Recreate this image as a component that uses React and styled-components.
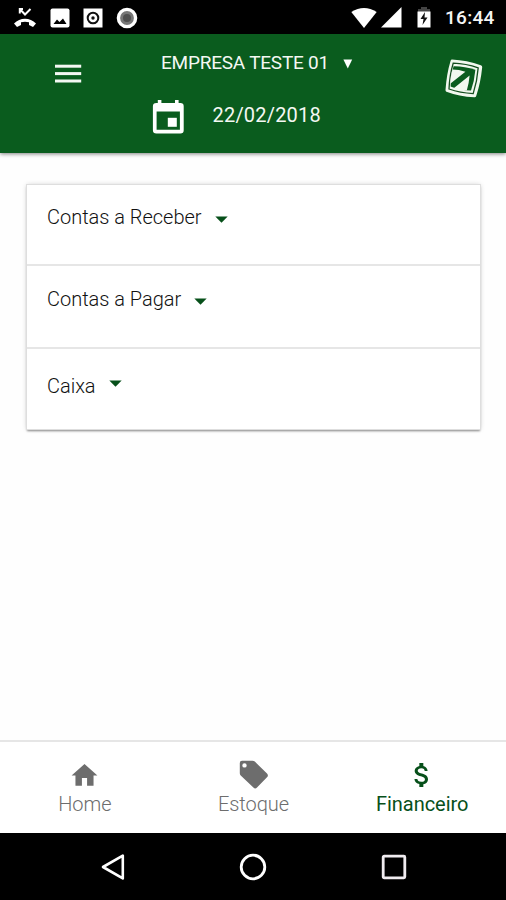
import React, { useState } from 'react'
import styled, { createGlobalStyle } from 'styled-components';
import { MdHome, MdAttachMoney } from 'react-icons/md';

const accounts = [
  { title: 'Contas a Receber', height: 79, top: 19, arrow: 3 },
  { title: 'Contas a Pagar', height: 83, top: 20, arrow: 3 },
  { title: 'Caixa', height: 82, top: 24, arrow: -2 },
];

const StatusBar = () => (
  <Status>
    <StatusGroup>
      <svg width="24" height="21" viewBox="0 0 24 21" fill="#fff">
        <path d="M1 16.5 C7 10 17 10 23 16.5 L20 20 L16 18 V15.3 Q12 14 8 15.3 V18 L4 20 Z" />
        <path d="M6.8 6.5 V2 H10 M7 2.3 L12 7.5 L17.5 2" fill="none" stroke="#fff" strokeWidth="2" />
      </svg>
      <svg width="20" height="20" viewBox="0 0 20 20">
        <rect x="0.5" y="0.5" width="19" height="19" rx="2" fill="#fff" />
        <path d="M3.5 16 L7 11.5 L9.5 14 L13 10.5 L16.5 16 Z" fill="#000" />
      </svg>
      <svg width="20" height="20" viewBox="0 0 20 20">
        <rect x="0.5" y="0.5" width="19" height="19" fill="#fff" />
        <circle cx="10" cy="10" r="5.3" fill="none" stroke="#111" strokeWidth="2" />
        <circle cx="10" cy="10" r="1.7" fill="#111" />
      </svg>
      <svg width="22" height="22" viewBox="0 0 22 22">
        <circle cx="11" cy="11" r="8.6" fill="#777" stroke="#fff" strokeWidth="3.4" />
        <circle cx="11" cy="11" r="4" fill="#4f4f4f" />
      </svg>
    </StatusGroup>
    <StatusRight>
      <svg width="26" height="20" viewBox="0 0 26 20">
        <path d="M0.3 4 Q13 -4 25.7 4 L13 20 Z" fill="#fff" />
      </svg>
      <svg width="21" height="21" viewBox="0 0 21 21">
        <path d="M0 20.5 L20.5 0 V20.5 Z" fill="#fff" />
      </svg>
      <svg width="14" height="21" viewBox="0 0 14 21">
        <path d="M4 0 H10 V2 H13 V6 H1 V2 H4 Z" fill="#444" />
        <rect x="0.5" y="4.5" width="13" height="16" fill="#fff" />
        <path d="M8 5 L3.5 12 H6.5 L5.5 18 L10.5 10.5 H7.5 Z" fill="#111" />
      </svg>
      <Clock>16:44</Clock>
    </StatusRight>
  </Status>
)

const Logo = () => (
  <svg width="38" height="39" viewBox="0 0 38 39">
    <path d="M7 0.6 Q22 1.4 35.8 6.2 Q37.4 6.8 37.2 8.2 Q35.6 24 31.2 37 Q30.8 38.4 29.4 38.3 Q14 37.6 1.4 32.8 Q0.4 32.2 0.5 31 Q1.6 15 5.6 1.8 Q6 0.6 7 0.6 Z" fill="#f2f8ef" />
    <path d="M8.2 4.2 Q21 4.6 33.2 8.9 Q32.2 22 28.2 34.6 Q15 34 4 30 Q4.6 16 8.2 4.2 Z" fill="none" stroke="#164f20" strokeWidth="1.3" />
    <path d="M8.6 7.2 Q19 7 30.4 10.8 Q29.4 22 26 31.6 Q15 31.6 5.6 27.6 Q5.8 16 8.6 7.2 Z" fill="#0a5c1e" />
    <path d="M7.4 10.6 Q14 10.6 20.4 12.8 L5.2 24.8 Q5.6 17 7.4 10.6 Z M24.6 16.4 Q24 24 21.8 31.6 Q14 31.2 8.4 29.4 Z" fill="#f2f8ef" />
  </svg>
)

const Header = ({ company, date }) => (
  <Top>
    <MenuButton aria-label="Menu">
      <svg width="27" height="19" viewBox="0 0 27 19" fill="#f4f8f3">
        <rect x="0" y="0.7" width="26.2" height="3" />
        <rect x="0" y="8.1" width="26.2" height="3" />
        <rect x="0" y="15.5" width="26.2" height="3" />
      </svg>
    </MenuButton>
    <Filters>
      <Company>
        <span>{company}</span>
        <svg width="10" height="10" viewBox="0 0 10 10">
          <path d="M0.4 0.4 H9.2 L4.8 9.6 Z" fill="#fff" />
        </svg>
      </Company>
      <DateRow>
        <svg width="32" height="35" viewBox="0 0 32 35">
          <path fillRule="evenodd" fill="#fff" d="M4.4 4 H5.8 V0.9 H9.4 V4 H23 V0.9 H26.6 V4 H28.4 Q31.7 4 31.7 7.3 V31.3 Q31.7 34.6 28.4 34.6 H4.4 Q0.9 34.6 0.9 31.3 V7.3 Q0.9 4 4.4 4 Z M4.6 12.6 V30.8 H27.9 V12.6 Z" />
          <rect x="15.8" y="18.8" width="9" height="9" fill="#fff" />
        </svg>
        <span>{date}</span>
      </DateRow>
    </Filters>
    <LogoBox><Logo /></LogoBox>
  </Top>
)

const App = () => {
  const [tab, setTab] = useState('Financeiro');

  const tabs = [
    { name: 'Home', icon: <MdHome size={31} /> },
    {
      name: 'Estoque',
      icon: (
        <svg width="30" height="30" viewBox="0 0 30 30">
          <path fillRule="evenodd" fill="currentColor" d="M3 0.7 H13.5 Q14.8 0.7 15.8 1.6 L28 13.6 Q29.8 15.4 28 17.2 L18 27.6 Q16.2 29.3 14.4 27.6 L1.7 15.4 Q0.8 14.5 0.8 13.2 V3 Q0.8 0.7 3 0.7 Z M5.5 3.2 A2.2 2.2 0 1 0 5.5 7.6 A2.2 2.2 0 1 0 5.5 3.2 Z" />
        </svg>
      ),
    },
    { name: 'Financeiro', icon: <MdAttachMoney size={32} /> },
  ];

  return (
    <Screen>
      <GlobalStyle />
      <StatusBar />
      <Header company="EMPRESA TESTE 01" date="22/02/2018" />
      <Content>
        <Card>
          {accounts.map((item) => (
            <Row key={item.title} $height={item.height} $top={item.top}>
              <span>{item.title}</span>
              <Caret $shift={item.arrow} width="13" height="7" viewBox="0 0 13 7">
                <path d="M0.3 0.4 H12.7 L6.5 6.8 Z" fill="#07501a" />
              </Caret>
            </Row>
          ))}
        </Card>
      </Content>
      <Tabs>
        {tabs.map((t) => (
          <Tab key={t.name} $active={tab === t.name} onClick={() => setTab(t.name)}>
            <TabIcon>{t.icon}</TabIcon>
            <span>{t.name}</span>
          </Tab>
        ))}
      </Tabs>
      <SystemBar>
        <svg width="26" height="28" viewBox="0 0 26 28">
          <path d="M23.8 2.6 V25.4 L4 14 Z" fill="none" stroke="#fff" strokeWidth="2.6" strokeLinejoin="round" />
        </svg>
        <svg width="28" height="28" viewBox="0 0 28 28">
          <circle cx="14" cy="14" r="11.8" fill="none" stroke="#fff" strokeWidth="2.8" />
        </svg>
        <svg width="26" height="26" viewBox="0 0 26 26">
          <rect x="2.2" y="2.2" width="21.6" height="21.6" rx="1" fill="none" stroke="#f0ecf0" strokeWidth="2.8" />
        </svg>
      </SystemBar>
    </Screen>
  )
};

const GlobalStyle = createGlobalStyle`
*{
  box-sizing: border-box;
}
body{
  margin: 0;
  background: #fff;
}
svg{
  display: block;
  flex-shrink: 0;
}
`
const Screen = styled.div`
width: 506px;
height: 900px;
display: flex;
flex-direction: column;
overflow: hidden;
background: #fefefe;
font-family: Roboto, "Liberation Sans", sans-serif;
`
const Status = styled.div`
height: 34px;
flex-shrink: 0;
display: flex;
justify-content: space-between;
background: #000;
`
const StatusGroup = styled.div`
display: flex;
align-items: center;
padding: 1px 0 0 13px;
gap: 13px;
`
const StatusRight = styled.div`
display: flex;
align-items: center;
padding: 1px 10px 0 0;
svg + svg{
  margin-left: 4px;
}
svg:nth-of-type(3){
  margin-left: 15px;
}
`
const Clock = styled.span`
margin: 1px 0 0 14px;
width: 51px;
color: #f4f4f4;
font-size: 19px;
font-weight: 500;
line-height: 22px;
letter-spacing: 0.3px;
white-space: nowrap;
`
const Top = styled.header`
height: 119px;
flex-shrink: 0;
display: flex;
align-items: flex-start;
background: #0a5c1e;
color: #f4f8f3;
box-shadow: 0 1px 4px rgba(0,0,0,0.5);
`
const MenuButton = styled.button`
width: 152px;
padding: 30px 0 0 55px;
border: none;
background: none;
`
const Filters = styled.div`
flex: 1;
display: flex;
flex-direction: column;
`
const Company = styled.div`
display: flex;
align-items: center;
gap: 15px;
padding: 18px 0 0 9px;
font-size: 19px;
line-height: 22px;
letter-spacing: -0.22px;
white-space: nowrap;
svg{
  margin: 1px 0 0 -1px;
}
`
const DateRow = styled.div`
display: flex;
align-items: center;
gap: 28px;
margin-top: 25px;
font-size: 20px;
line-height: 24px;
letter-spacing: 0.2px;
span{
  margin: -4px 0 0 0.5px;
}
`
const LogoBox = styled.div`
padding: 25px 23px 0 0;
`
const Content = styled.main`
flex: 1;
padding: 32px 26px 0 27px;
`
const Card = styled.section`
background: #fff;
box-shadow: 0 0 0 1px #dedede, 0 2px 2px rgba(0,0,0,0.42), 0 0 5px rgba(0,0,0,0.22);
`
const Row = styled.div`
display: flex;
align-items: flex-start;
gap: 13px;
height: ${(props) => props.$height}px;
padding: ${(props) => props.$top}px 0 0 20px;
color: #111;
font-size: 20px;
font-weight: 300;
line-height: 26px;
letter-spacing: -0.02px;
& + &{
  border-top: 2px solid #e6e6e6;
}
`
const Caret = styled.svg`
margin-top: ${(props) => 9 + props.$shift}px;
`
const Tabs = styled.nav`
height: 93px;
flex-shrink: 0;
display: flex;
border-top: 2px solid #e6e6e6;
background: #fff;
`
const Tab = styled.button`
flex: 1;
display: flex;
flex-direction: column;
align-items: center;
padding: 16px 0 0 1px;
border: none;
background: none;
color: ${(props) => (props.$active ? '#07501a' : '#6d6d6d')};
font-family: inherit;
font-size: 20px;
font-weight: ${(props) => (props.$active ? 400 : 300)};
line-height: 24px;
letter-spacing: -0.05px;
`
const TabIcon = styled.div`
height: 34px;
display: flex;
align-items: center;
`
const SystemBar = styled.footer`
height: 67px;
flex-shrink: 0;
display: flex;
align-items: center;
justify-content: center;
gap: 114px;
background: #000;
`
export default App;
